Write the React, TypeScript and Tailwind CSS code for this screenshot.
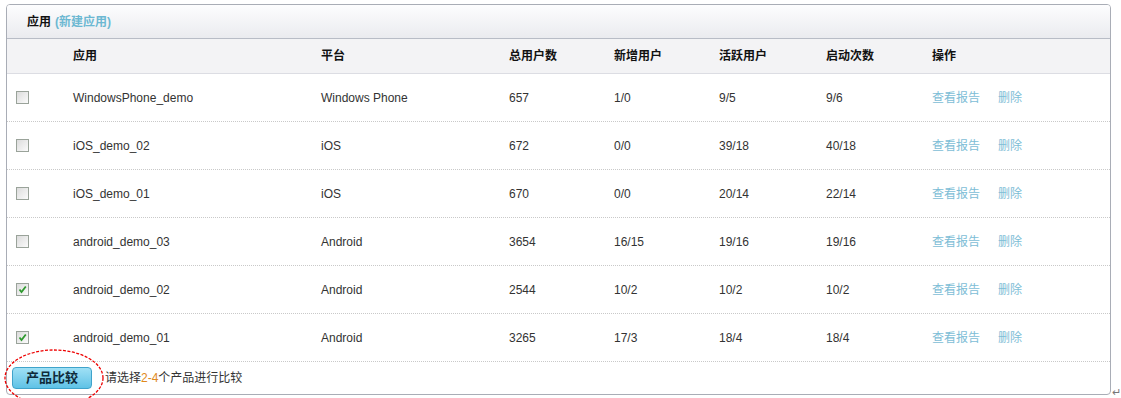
const apps = [
  { name: "WindowsPhone_demo", platform: "Windows Phone", total: "657", added: "1/0", active: "9/5", launches: "9/6", checked: false },
  { name: "iOS_demo_02", platform: "iOS", total: "672", added: "0/0", active: "39/18", launches: "40/18", checked: false },
  { name: "iOS_demo_01", platform: "iOS", total: "670", added: "0/0", active: "20/14", launches: "22/14", checked: false },
  { name: "android_demo_03", platform: "Android", total: "3654", added: "16/15", active: "19/16", launches: "19/16", checked: false },
  { name: "android_demo_02", platform: "Android", total: "2544", added: "10/2", active: "10/2", launches: "10/2", checked: true },
  { name: "android_demo_01", platform: "Android", total: "3265", added: "17/3", active: "18/4", launches: "18/4", checked: true },
];

const cols = "grid grid-cols-[66px_248px_188px_105px_105px_107px_106px_1fr] items-center";

function Checkbox({ checked }: { checked: boolean }) {
  return (
    <span className="ml-[9px] flex h-[13px] w-[13px] items-center justify-center border border-[#9aa39a] bg-gradient-to-br from-[#dcdcdc] to-[#fbfbfb]">
      {checked && (
        <svg width="9" height="9" viewBox="0 0 9 9">
          <path d="M1.5 4.5 L3.5 7 L7.8 1.5" fill="none" stroke="#2f9a2f" strokeWidth="1.8" />
        </svg>
      )}
    </span>
  );
}

export default function App() {
  return (
    <div className="relative h-[398px] w-[1121px] bg-white pt-[4px] pl-[6px] font-['Liberation_Sans','Noto_Sans_CJK_SC',sans-serif] text-[12px] text-[#333]">
      <div className="w-[1105px] rounded-[4px] border border-[#a9adb6] overflow-hidden">
        {/* title bar */}
        <div className="flex h-[33px] items-center bg-gradient-to-b from-[#fdfdfe] to-[#eaebef] pl-[20px]">
          <span className="font-bold text-[#111]">应用</span>
          <span className="ml-[4px] font-bold text-[#6cb8d2]">(新建应用)</span>
        </div>

        {/* column header */}
        <div className={`${cols} h-[36px] border-t border-b border-t-[#b8bcc6] border-b-[#dcdde3] bg-[#f3f3f5] font-bold text-[#111]`}>
          <span />
          <span>应用</span>
          <span>平台</span>
          <span>总用户数</span>
          <span>新增用户</span>
          <span>活跃用户</span>
          <span>启动次数</span>
          <span>操作</span>
        </div>

        {apps.map((a) => (
          <div key={a.name} className={`${cols} h-[48px] border-b border-dotted border-[#c9c9c9]`}>
            <Checkbox checked={a.checked} />
            <span>{a.name}</span>
            <span>{a.platform}</span>
            <span>{a.total}</span>
            <span>{a.added}</span>
            <span>{a.active}</span>
            <span>{a.launches}</span>
            <span className="flex gap-[18px] text-[#7dbdd6]">
              <span>查看报告</span>
              <span>删除</span>
            </span>
          </div>
        ))}

        {/* footer */}
        <div className="flex h-[32px] items-center pl-[5px]">
          <button className="h-[22px] w-[80px] rounded-[4px] border border-[#3fa3cb] bg-gradient-to-b from-[#9fe0f5] to-[#5ec2e6] text-[13px] font-bold text-[#0f2a3a]">
            产品比较
          </button>
          <span className="ml-[13px]">
            请选择<span className="text-[#e0891c]">2-4</span>个产品进行比较
          </span>
        </div>
      </div>

      <span className="absolute left-[1112px] top-[384px] text-[11px] text-[#777]">↵</span>

      {/* hand-drawn highlight */}
      <svg className="pointer-events-none absolute left-0 top-0" width="1121" height="398">
        <ellipse cx="54" cy="378" rx="49" ry="28" fill="none" stroke="#ee0000" strokeWidth="1.3" strokeDasharray="3 1.5" />
      </svg>
    </div>
  );
}
